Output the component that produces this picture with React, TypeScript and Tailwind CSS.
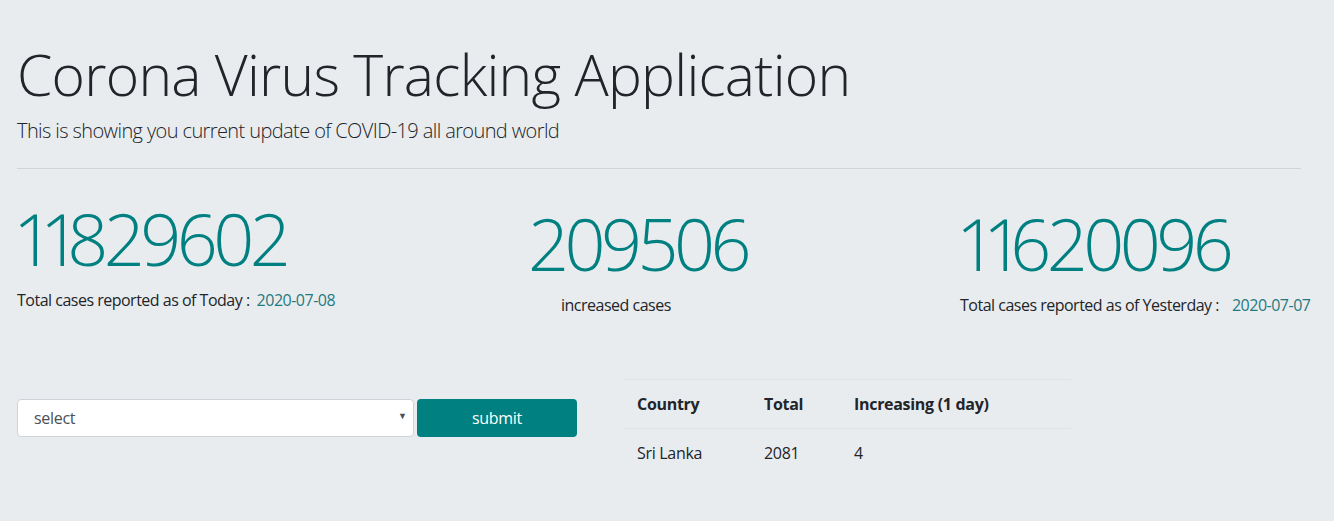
import { useState } from 'react';

const stats = {
  today: 11829602,
  yesterday: 11620096,
  todayDate: '2020-07-08',
  yesterdayDate: '2020-07-07',
};

const rows = [{ country: 'Sri Lanka', total: 2081, increasing: 4 }];

// big teal counter; the "1" glyph is tightened so the figures sit like the original font
function BigNumber({ value }: { value: number }) {
  return (
    <p className="-ml-[4px] text-[72px] leading-[96px] font-light text-[#008080] tracking-[-4.6px] whitespace-nowrap">
      {String(value)
        .split('')
        .map((d, i) =>
          d === '1' ? (
            <span key={i} className="tracking-[-14px]">
              1
            </span>
          ) : (
            <span key={i}>{d}</span>
          )
        )}
    </p>
  );
}

export default function App() {
  const [country, setCountry] = useState('');
  const increased = stats.today - stats.yesterday;

  return (
    <div className="min-h-screen bg-[#e9ecef] text-[#212529] font-['Open_Sans',sans-serif]">
      <div className="pl-[17px] pr-[33px] pt-[38px]">
        {/* Heading */}
        <h1 className="text-[57px] leading-[72px] font-light tracking-[-0.75px]">
          Corona Virus Tracking Application
        </h1>
        <p className="mt-[6px] text-[20px] leading-[30px] font-light tracking-[-0.6px]">
          This is showing you current update of COVID-19 all around world
        </p>
        <hr className="mt-[22px] border-0 border-t border-[#d2d4d7]" />

        {/* Numbers */}
        <div className="mt-[21px] grid grid-cols-3 tracking-[-0.5px]">
          <div>
            <BigNumber value={stats.today} />
            <p className="mt-[2px] text-[16px] leading-[24px]">
              Total cases reported as of Today :
              <span className="ml-[7px] text-[#1f7a80]">{stats.todayDate}</span>
            </p>
          </div>
          <div className="pt-[5px] pl-[87px]">
            <BigNumber value={increased} />
            <p className="mt-[2px] pl-[29px] text-[16px] leading-[24px]">increased cases</p>
          </div>
          <div className="pt-[5px] pl-[87px]">
            <BigNumber value={stats.yesterday} />
            <p className="mt-[2px] whitespace-nowrap text-[16px] leading-[24px]">
              Total cases reported as of Yesterday :
              <span className="ml-[13px] text-[#1f7a80]">{stats.yesterdayDate}</span>
            </p>
          </div>
        </div>

        {/* Search + table */}
        <div className="mt-[62px] flex items-start">
          <form
            className="mt-[20px] flex w-[607px] gap-[3px]"
            onSubmit={(e) => e.preventDefault()}
          >
            <div className="relative w-[397px]">
              <select
                value={country}
                onChange={(e) => setCountry(e.target.value)}
                className="h-[38px] w-full appearance-none rounded-[4px] border border-[#ced4da] bg-white pl-[16px] text-[16px] text-[#495057] tracking-[-0.3px] outline-none"
              >
                <option value="">select</option>
                <option value="Sri Lanka">Sri Lanka</option>
              </select>
              <span className="pointer-events-none absolute right-[7px] top-[10px] text-[9px] text-[#495057]">
                ▼
              </span>
            </div>
            <button
              type="submit"
              className="h-[38px] w-[160px] rounded-[4px] bg-[#008080] text-[16px] text-white tracking-[-0.3px]"
            >
              submit
            </button>
          </form>

          <table className="w-[447px] border-collapse text-left text-[16px] leading-[24px] tracking-[-0.3px]">
            <thead>
              <tr className="border-t border-b border-[#dee2e6]">
                <th className="w-[127px] p-[12px] pl-[13px] font-bold">Country</th>
                <th className="w-[90px] p-[12px] pl-[13px] font-bold">Total</th>
                <th className="p-[12px] pl-[13px] font-bold">Increasing (1 day)</th>
              </tr>
            </thead>
            <tbody>
              {rows.map((r) => (
                <tr key={r.country}>
                  <td className="p-[12px] pl-[13px]">{r.country}</td>
                  <td className="p-[12px] pl-[13px]">{r.total}</td>
                  <td className="p-[12px] pl-[13px]">{r.increasing}</td>
                </tr>
              ))}
            </tbody>
          </table>
        </div>
      </div>
    </div>
  );
}
